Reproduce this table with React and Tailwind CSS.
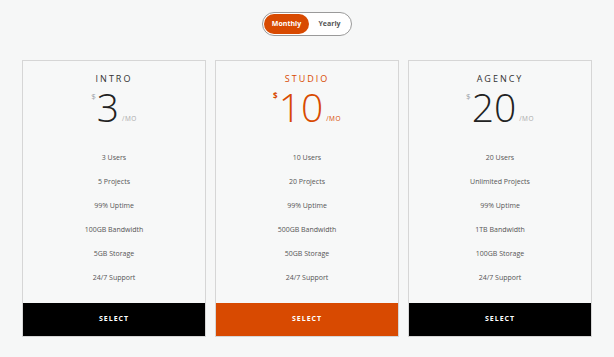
import React, { useState } from "react";

const plans = [
	{
		name: "INTRO",
		price: "3",
		features: ["3 Users", "5 Projects", "99% Uptime", "100GB Bandwidth", "5GB Storage", "24/7 Support"],
		featured: false,
	},
	{
		name: "STUDIO",
		price: "10",
		features: ["10 Users", "20 Projects", "99% Uptime", "500GB Bandwidth", "50GB Storage", "24/7 Support"],
		featured: true,
	},
	{
		name: "AGENCY",
		price: "20",
		features: ["20 Users", "Unlimited Projects", "99% Uptime", "1TB Bandwidth", "100GB Storage", "24/7 Support"],
		featured: false,
	},
];

const PlanCard = ({ plan }) => {
	return (
		<div className="flex flex-col border border-[#d6d6d6] bg-[#f7f8f8]">
			{/* Title */}
			<p
				className={`mt-[12px] text-center text-[9px] leading-[11px] tracking-[2px] ${
					plan.featured ? "text-[#d84a01]" : "text-[#333]"
				}`}
			>
				{plan.name}
			</p>

			{/* Price */}
			<div className="mt-[5px] flex h-[36px] items-start justify-center">
				<span
					className={`mt-[2px] mr-[1px] text-[8px] leading-[9px] ${
						plan.featured ? "text-[#d84a01] font-bold" : "text-[#9aa0a6]"
					}`}
				>
					$
				</span>
				<span
					className={`text-[39px] leading-[36px] font-light ${
						plan.featured ? "text-[#d84a01]" : "text-[#222]"
					}`}
				>
					{plan.price}
				</span>
				<span
					className={`ml-[3px] mt-[26px] text-[6.5px] leading-[8px] tracking-[0.5px] ${
						plan.featured ? "text-[#d84a01]" : "text-[#aaa]"
					}`}
				>
					/MO
				</span>
			</div>

			{/* Features */}
			<ul className="mt-[21px] flex flex-col">
				{plan.features.map((f) => (
					<li key={f} className="flex h-[24px] items-center justify-center text-[7px] text-[#555]">
						{f}
					</li>
				))}
			</ul>

			{/* Button */}
			<button
				className={`mt-[13px] h-[33px] w-full text-[7px] font-bold tracking-[1px] text-white ${
					plan.featured ? "bg-[#d84a01]" : "bg-black"
				}`}
			>
				SELECT
			</button>
		</div>
	);
};

const App = () => {
	const [period, setPeriod] = useState("monthly");

	return (
		<div
			className="h-[357px] w-[614px] bg-[#f6f7f7]"
			style={{ fontFamily: '"Open Sans", "Liberation Sans", sans-serif' }}
		>
			{/* Toggle */}
			<div className="flex justify-center pt-[12px]">
				<div className="flex h-[24px] w-[90px] items-center rounded-full border border-[#9a9a9a] bg-white p-[1px]">
					<button
						onClick={() => setPeriod("monthly")}
						className={`h-[20px] w-[45px] rounded-full text-[7px] font-bold ${
							period === "monthly" ? "bg-[#d84a01] text-white" : "text-[#555]"
						}`}
					>
						Monthly
					</button>
					<button
						onClick={() => setPeriod("yearly")}
						className={`h-[20px] flex-1 rounded-full text-[7px] font-bold ${
							period === "yearly" ? "bg-[#d84a01] text-white" : "text-[#555]"
						}`}
					>
						Yearly
					</button>
				</div>
			</div>

			{/* Cards */}
			<div className="mt-[24px] grid grid-cols-3 gap-[9px] px-[22px]">
				{plans.map((p) => (
					<PlanCard key={p.name} plan={p} />
				))}
			</div>
		</div>
	);
};

export default App;
